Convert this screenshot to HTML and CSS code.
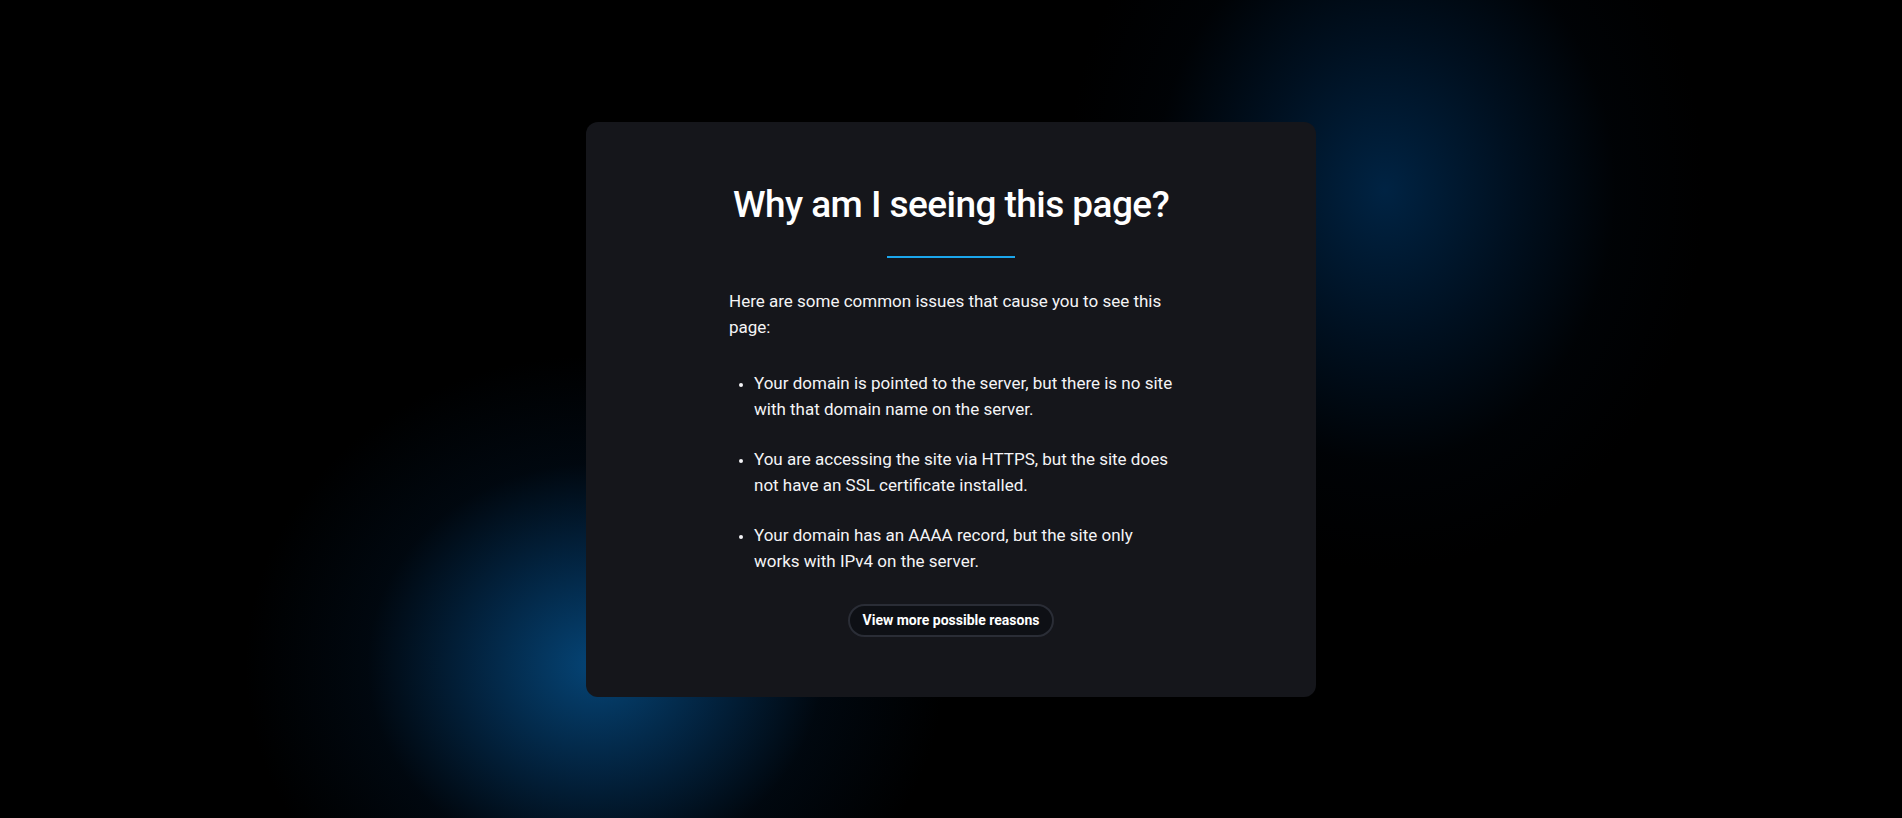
FILE: index.html
```html
<!DOCTYPE html>
<html lang="en">
<head>
<meta charset="utf-8">
<title>Why am I seeing this page?</title>
<link rel="stylesheet" href="styles.css">
</head>
<body>
<main class="page">
  <section class="card">
    <h1 class="title">Why am I seeing this page?</h1>
    <div class="divider"></div>
    <div class="content">
      <p class="intro">Here are some common issues that cause you to see this page:</p>
      <ul class="reasons">
        <li>Your domain is pointed to the server, but there is no site with that domain name on the server.</li>
        <li>You are accessing the site via HTTPS, but the site does not have an SSL certificate installed.</li>
        <li>Your domain has an AAAA record, but the site only works with IPv4 on the server.</li>
      </ul>
    </div>
    <div class="actions">
      <a class="more-btn" href="#">View more possible reasons</a>
    </div>
  </section>
</main>
</body>
</html>
```

FILE: styles.css
```css
html, body {
  margin: 0;
  padding: 0;
  height: 100%;
}

body {
  font-family: Roboto, "Liberation Sans", Arial, sans-serif;
  color: #f4f4f6;
  background-color: #000;
  background-image:
    radial-gradient(ellipse 350px 310px at 595px 665px, rgba(6, 80, 138, 0.85) 0%, rgba(4, 58, 105, 0.6) 35%, rgba(2, 30, 60, 0.25) 65%, rgba(0, 0, 0, 0) 100%),
    radial-gradient(ellipse 320px 380px at 1385px 190px, rgba(0, 44, 84, 0.8) 0%, rgba(0, 32, 64, 0.5) 40%, rgba(0, 14, 30, 0.18) 72%, rgba(0, 0, 0, 0) 100%);
  background-repeat: no-repeat;
}

.page {
  min-height: 100vh;
  display: flex;
  align-items: center;
  justify-content: center;
}

.card {
  width: 730px;
  box-sizing: border-box;
  padding: 60px 0 60px;
  background: #15161b;
  border-radius: 12px;
  display: flex;
  flex-direction: column;
  align-items: center;
}

.title {
  margin: 0 0 29px;
  font-size: 37px;
  font-weight: 500;
  letter-spacing: -0.55px;
  line-height: 45px;
  text-align: center;
  color: #ffffff;
}

.divider {
  width: 128px;
  height: 2px;
  margin: 0 0 30px;
  background: #1ba6ec;
}

.content {
  width: 448px;
  margin-left: 4px;
}

.intro {
  margin: 0 0 30px;
  font-size: 17px;
  line-height: 26px;
}

.reasons {
  margin: 0 0 30px;
  padding: 0 0 0 25px;
  font-size: 17px;
  line-height: 26px;
  list-style: disc;
}

.reasons li {
  margin: 0 0 24px;
}

.reasons li:last-child {
  margin-bottom: 0;
}

.reasons li::marker {
  font-size: 13px;
}

.actions {
  display: flex;
  justify-content: center;
}

.more-btn {
  display: inline-block;
  padding: 6px 13px;
  border: 2px solid #2a2d36;
  border-radius: 999px;
  background: #0e1015;
  color: #ffffff;
  font-size: 14px;
  font-weight: 700;
  line-height: 17px;
  text-decoration: none;
}
```
